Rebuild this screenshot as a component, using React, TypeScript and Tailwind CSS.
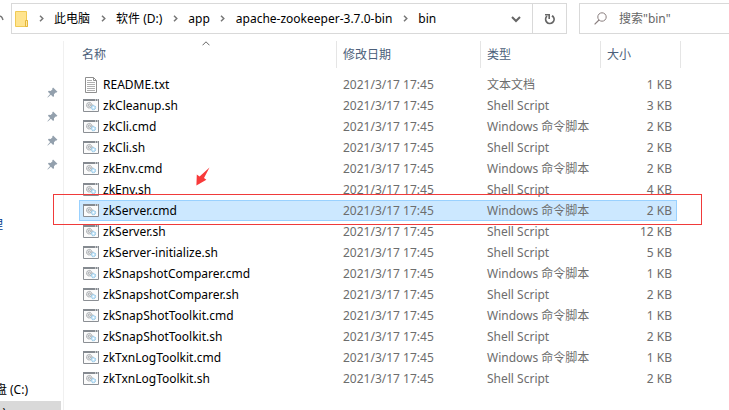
import type { ReactNode } from 'react'

type FileKind = 'text' | 'script'

interface FileRow {
  name: string
  kind: FileKind
  type: string
  size: string
  selected?: boolean
}

const MODIFIED = '2021/3/17 17:45'

const crumbs = ['此电脑', '软件 (D:)', 'app', 'apache-zookeeper-3.7.0-bin', 'bin']

const files: FileRow[] = [
  { name: 'README.txt', kind: 'text', type: '文本文档', size: '1 KB' },
  { name: 'zkCleanup.sh', kind: 'script', type: 'Shell Script', size: '3 KB' },
  { name: 'zkCli.cmd', kind: 'script', type: 'Windows 命令脚本', size: '2 KB' },
  { name: 'zkCli.sh', kind: 'script', type: 'Shell Script', size: '2 KB' },
  { name: 'zkEnv.cmd', kind: 'script', type: 'Windows 命令脚本', size: '2 KB' },
  { name: 'zkEnv.sh', kind: 'script', type: 'Shell Script', size: '4 KB' },
  { name: 'zkServer.cmd', kind: 'script', type: 'Windows 命令脚本', size: '2 KB', selected: true },
  { name: 'zkServer.sh', kind: 'script', type: 'Shell Script', size: '12 KB' },
  { name: 'zkServer-initialize.sh', kind: 'script', type: 'Shell Script', size: '5 KB' },
  { name: 'zkSnapshotComparer.cmd', kind: 'script', type: 'Windows 命令脚本', size: '1 KB' },
  { name: 'zkSnapshotComparer.sh', kind: 'script', type: 'Shell Script', size: '2 KB' },
  { name: 'zkSnapShotToolkit.cmd', kind: 'script', type: 'Windows 命令脚本', size: '1 KB' },
  { name: 'zkSnapShotToolkit.sh', kind: 'script', type: 'Shell Script', size: '2 KB' },
  { name: 'zkTxnLogToolkit.cmd', kind: 'script', type: 'Windows 命令脚本', size: '1 KB' },
  { name: 'zkTxnLogToolkit.sh', kind: 'script', type: 'Shell Script', size: '2 KB' },
]

function FolderIcon() {
  return (
    <svg className="h-4 w-[13px] shrink-0" viewBox="0 0 13 16" fill="none">
      <path d="M.5.5h11v9h1v6H.5z" fill="#ffe48f" stroke="#f0ca55" />
      <path d="M10.5 9.5h2v6h-2z" fill="#ffe9a6" stroke="#e5b73a" />
    </svg>
  )
}

function CrumbArrow() {
  return (
    <svg className="h-[7px] w-[5px] shrink-0" viewBox="0 0 5 7" fill="none">
      <path d="M1 .7l2.8 2.8L1 6.3" stroke="#777" strokeWidth="1.5" />
    </svg>
  )
}

function TextFileIcon() {
  return (
    <svg className="h-4 w-4 shrink-0" viewBox="0 0 16 16" fill="none">
      <path d="M2.5.5h8l3 3v12h-11z" fill="#fff" stroke="#8f8f8f" />
      <path d="M10.5.5v3h3" stroke="#8f8f8f" />
      <path d="M4 3.5h5M4 5.5h8M4 7.5h8M4 9.5h8M4 11.5h8M4 13.5h8" stroke="#b0b0b0" />
    </svg>
  )
}

function ScriptIcon() {
  return (
    <svg className="h-[13px] w-4 shrink-0" viewBox="0 0 16 13" fill="none">
      <path d="M.5 1h15v11.5H.5z" fill="#fbfbfb" stroke="#8b8f94" />
      <path d="M0 1h16" stroke="#858a90" strokeWidth="2" />
      <path d="M12 1h1M14 1h1" stroke="#fff" />
      <circle cx="6.3" cy="6.2" r="2.8" fill="#e4e6e8" stroke="#8f9397" strokeDasharray="1.3 .7" />
      <circle cx="6.3" cy="6.2" r="1.1" fill="#fff" stroke="#8b8f94" strokeWidth=".7" />
      <circle cx="10.4" cy="8.6" r="2.2" fill="#c4e4f8" stroke="#86bfe2" strokeDasharray="1.2 .6" />
      <circle cx="10.4" cy="8.6" r=".8" fill="#fff" />
    </svg>
  )
}

function PinIcon() {
  return (
    <svg className="h-[11px] w-[11px]" viewBox="0 0 12 12">
      <path d="M6.6.6l4.8 4.6-1 .9-.9-.2-1.9 2 .1 2-1 1-2.5-2.5L.9 11.5l-.5-.4 3-3.5L1 5.2l1-1 2 .1 2-1.9-.3-.9z" fill="#93a0ad" />
    </svg>
  )
}

function Header({ children }: { children: ReactNode }) {
  return (
    <th scope="col" className="border-r border-[#e5e5e5] p-0 pl-1.5 text-left font-normal text-[#4c607a]">
      {children}
    </th>
  )
}

function AddressBar() {
  return (
    <header className="flex h-[41px] items-start pt-[3px]">
      <svg className="mt-3 h-[7px] w-[11px] shrink-0" viewBox="0 0 11 7" fill="none">
        <path d="M-1 1.5C1 .5 2 2 3 5" stroke="#777" strokeWidth="1.5" />
      </svg>
      <nav className="flex h-[31px] min-w-0 flex-1 border border-[#d9d9d9]" aria-label="Address">
        <ol className="flex min-w-0 flex-1 items-center pl-[3px]">
          <li className="flex">
            <FolderIcon />
          </li>
          {crumbs.map((crumb) => (
            <li key={crumb} className="flex items-center whitespace-nowrap">
              <span className="flex w-[26px] justify-center">
                <CrumbArrow />
              </span>
              <a href="#" className="text-black">{crumb}</a>
            </li>
          ))}
        </ol>
        <button type="button" aria-label="History" className="flex w-8 items-center justify-center">
          <svg className="h-2 w-[10px]" viewBox="0 0 10 8" fill="none">
            <path d="M1 2l4 4 4-4" stroke="#666" strokeWidth="2" />
          </svg>
        </button>
        <button type="button" aria-label="Refresh" className="flex w-[34px] items-center justify-center border-l border-[#d9d9d9]">
          <svg className="h-3 w-3" viewBox="0 0 12 12" fill="none">
            <path d="M3 3.2A4.2 4.2 0 1 0 9.2 3.7L8 2.7" stroke="#666" strokeWidth="1.8" />
            <path d="M5.2 6V1.8H1" stroke="#666" strokeWidth="1.6" />
          </svg>
        </button>
      </nav>
      <label className="ml-3 flex h-[31px] w-[150px] items-center gap-3 border border-r-0 border-[#d9d9d9] pl-3.5">
        <svg className="h-[13px] w-[13px] shrink-0" viewBox="0 0 13 13" fill="none">
          <circle cx="8" cy="5" r="4.2" stroke="#8a7f7f" />
          <path d="M5 8L.6 12.4" stroke="#8a7f7f" strokeWidth="1.2" />
        </svg>
        <input type="text" aria-label="Search" placeholder={'搜索"bin"'} className="w-full min-w-0 outline-none placeholder:text-[#666]" />
      </label>
    </header>
  )
}

function Sidebar() {
  return (
    <aside className="flex w-16 shrink-0 flex-col overflow-hidden border-r border-[#f0f0f0]">
      <ul className="flex flex-col pt-[46px]">
        {[0, 1, 2, 3].map((pin) => (
          <li key={pin} className="flex h-6 justify-end pr-[5px]">
            <PinIcon />
          </li>
        ))}
      </ul>
      {/* labels are scrolled off to the left, only their ends show */}
      <a href="#" className="mt-8 flex w-[3px] justify-end whitespace-nowrap text-[#003a8c]">管理</a>
      <div className="mt-auto">
        <a href="#" className="flex h-6 w-7 items-center justify-end whitespace-nowrap text-black">盘 (C:)</a>
        <a href="#" className="flex h-[9px] w-[61px] overflow-hidden bg-[#d9d9d9] text-black">
          <span className="flex w-1.5 justify-end whitespace-nowrap leading-6">(D:)</span>
        </a>
      </div>
    </aside>
  )
}

function FileTable() {
  return (
    <table className="ml-[15px] w-[602px] table-fixed border-separate border-spacing-0">
      <colgroup>
        <col className="w-[258px]" />
        <col className="w-36" />
        <col className="w-[120px]" />
        <col className="w-[76px]" />
        <col className="w-1" />
      </colgroup>
      <thead>
        <tr className="h-[27px]">
          <th scope="col" className="relative border-r border-[#e5e5e5] p-0 pl-[3px] text-left font-normal text-[#4c607a]">
            名称
            <svg className="absolute top-0 left-[123px] h-[5px] w-2" viewBox="0 0 8 5" fill="none">
              <path d="M.5 4.3L4 .8l3.5 3.5" stroke="#666" />
            </svg>
          </th>
          <Header>修改日期</Header>
          <Header>类型</Header>
          <th scope="col" colSpan={2} className="border-r border-[#e5e5e5] p-0 pl-1.5 text-left font-normal text-[#4c607a]">
            大小
          </th>
        </tr>
      </thead>
      <tbody className="before:block before:h-1.5 before:content-['']">
        {files.map((file) => {
          const cell = file.selected ? 'border-y border-[#99d1ff] bg-[#cce8ff] p-0' : 'border-y border-transparent p-0'
          return (
            <tr key={file.name} className="h-[21px] text-[#6d6d6d]">
              <td className={`${cell} border-l`}>
                <span className="flex items-center gap-1 pl-[3px] text-black">
                  {file.kind === 'text' ? <TextFileIcon /> : <ScriptIcon />}
                  {file.name}
                </span>
              </td>
              <td className={`${cell} pl-1.5`}>{MODIFIED}</td>
              <td className={`${cell} pl-1.5`}>{file.type}</td>
              <td className={`${cell} border-r pr-1 text-right`}>{file.size}</td>
              <td className="p-0" />
            </tr>
          )
        })}
      </tbody>
    </table>
  )
}

export default function App() {
  return (
    <div className="flex h-screen flex-col overflow-hidden bg-white font-['Noto_Sans','Noto_Sans_CJK_SC',sans-serif] text-[12px] leading-[19px]">
      <AddressBar />
      <div className="relative flex min-h-0 flex-1">
        <Sidebar />
        <main className="min-w-0 flex-1">
          <FileTable />
        </main>
        {/* callout around the selected script */}
        <div className="pointer-events-none absolute top-[153px] left-[53px] h-[31px] w-[649px] border border-[#f03a3a]" />
        <svg className="pointer-events-none absolute top-[126px] left-[196px] h-[19px] w-[14px]" viewBox="0 0 14 19">
          <path d="M13.5.5L8 11l2.4 1.8L.4 18.5.8 7.5l2.8 2z" fill="#f83a3a" />
        </svg>
      </div>
    </div>
  )
}
